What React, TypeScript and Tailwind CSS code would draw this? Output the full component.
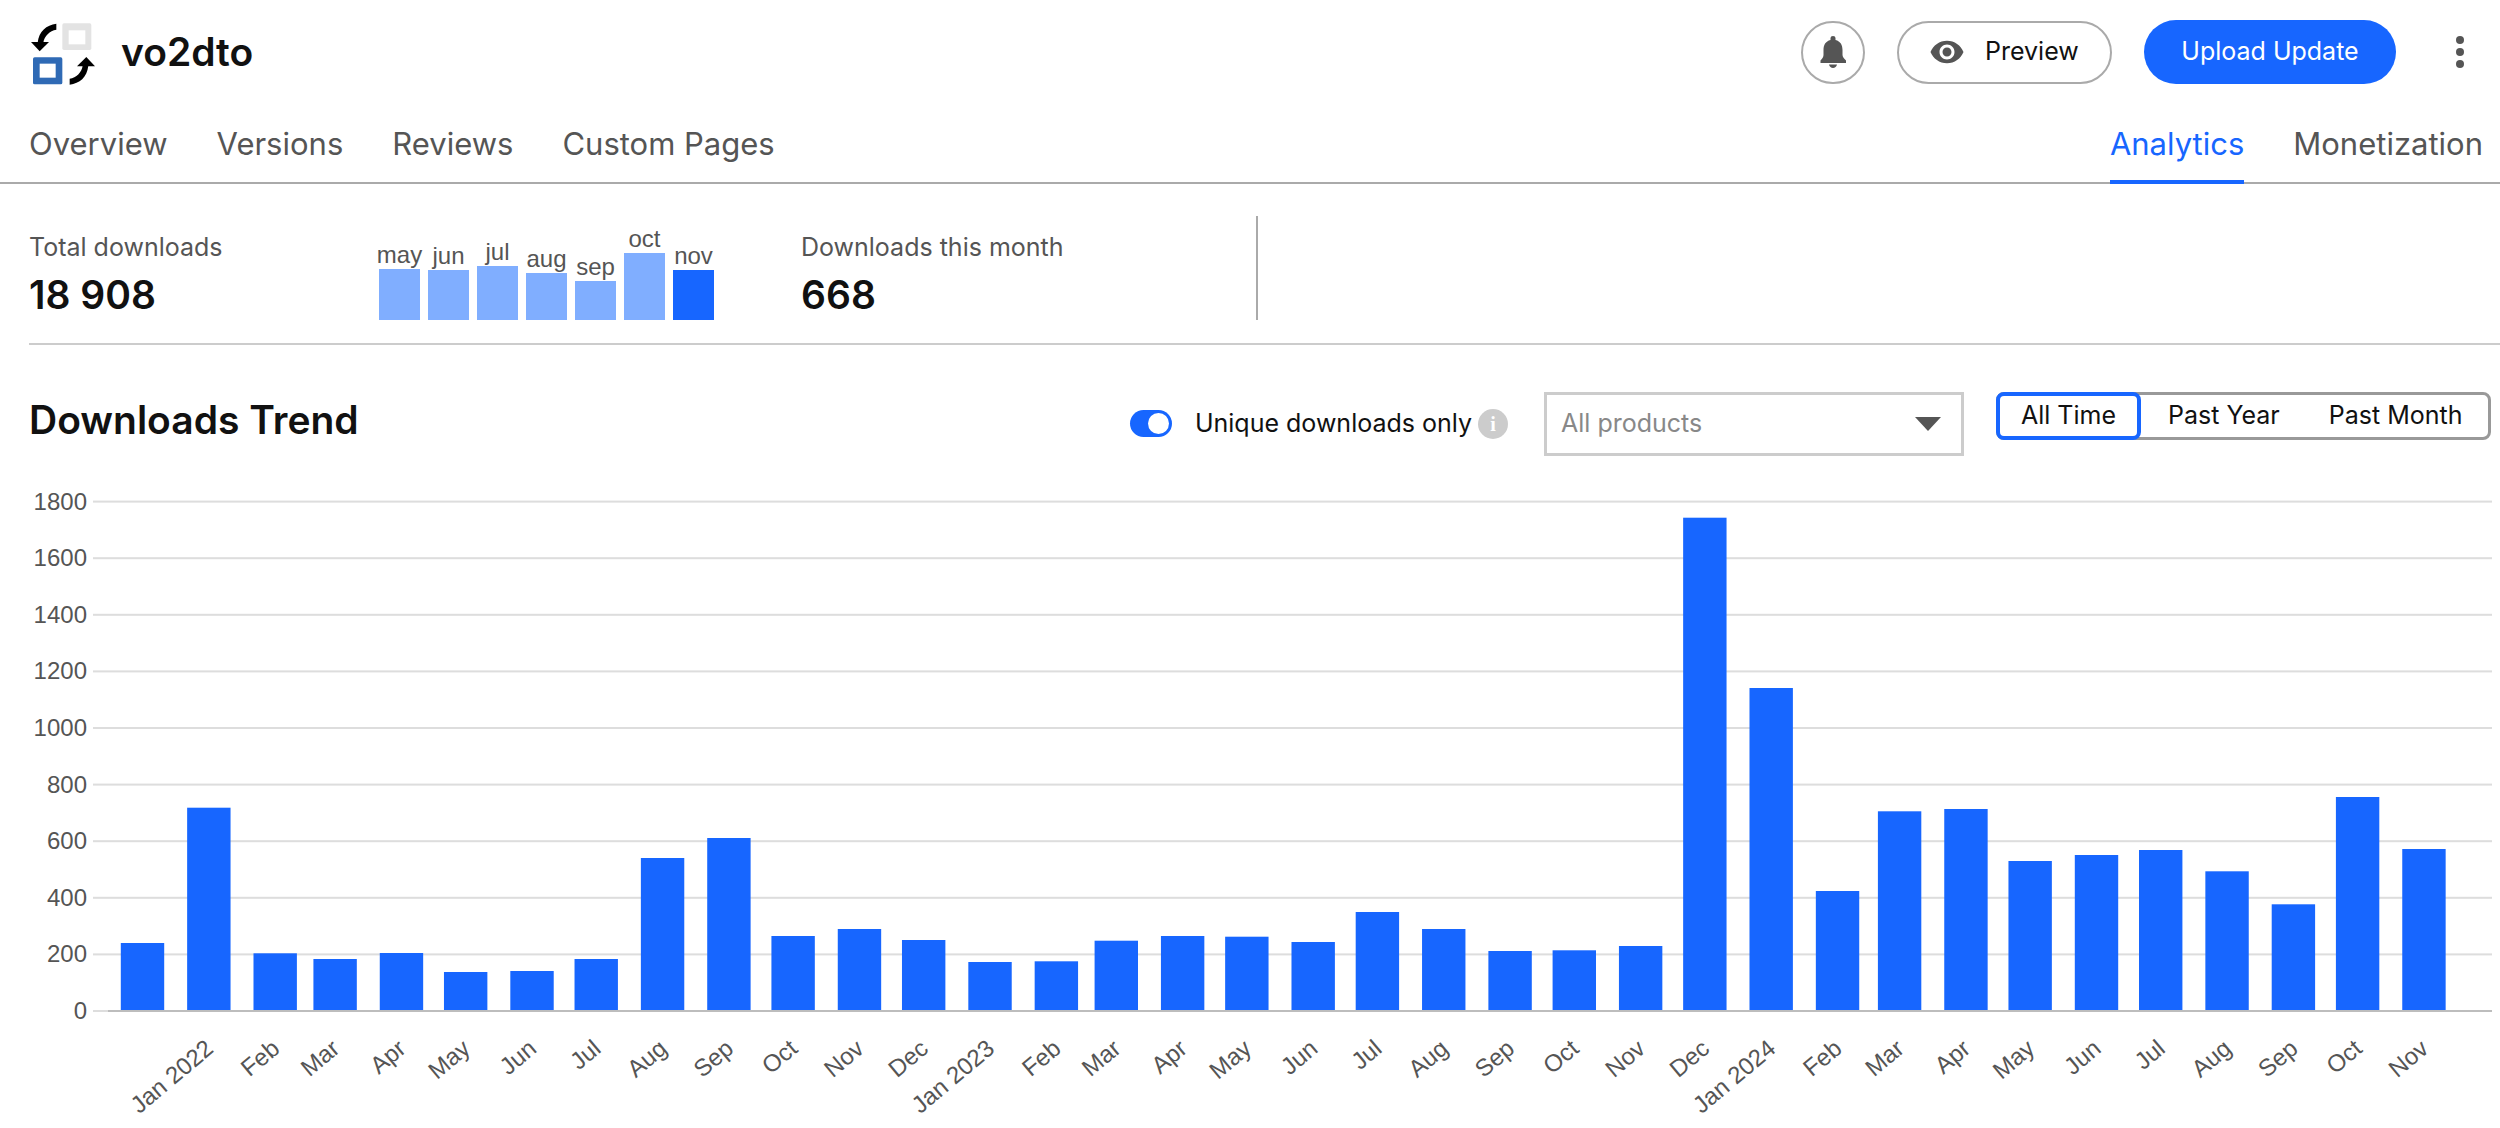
import { MdVisibility } from "react-icons/md"

const tops = [
  944, 808.7, 954.3, 960, 954, 973, 972, 960, 859, 839, 937, 930,
  941, 963, 962.3, 941.7, 937, 937.7, 943, 913, 930, 952, 951.3, 947,
  518.7, 689, 892, 812.3, 810, 862, 856, 851, 872.3, 905.3, 798, 850,
]

// days per month starting Dec 2021, the axis is a real time axis
const monthDays = [31, 31, 28, 31, 30, 31, 30, 31, 31, 30, 31, 30, 31, 31, 28, 31, 30, 31, 30, 31, 31, 30, 31, 30, 31, 31, 29, 31, 30, 31, 30, 31, 31, 30, 31]
const centers = monthDays.reduce((acc, d) => [...acc, acc[acc.length - 1] + d * 2.1402], [142.5])

const months = ["Jan 2022", "Feb", "Mar", "Apr", "May", "Jun", "Jul", "Aug", "Sep", "Oct", "Nov", "Dec", "Jan 2023", "Feb", "Mar", "Apr", "May", "Jun", "Jul", "Aug", "Sep", "Oct", "Nov", "Dec", "Jan 2024", "Feb", "Mar", "Apr", "May", "Jun", "Jul", "Aug", "Sep", "Oct", "Nov"]

const ticks = [1800, 1600, 1400, 1200, 1000, 800, 600, 400, 200, 0]

const miniBars = [
  { label: "may", h: 51 },
  { label: "jun", h: 50 },
  { label: "jul", h: 54 },
  { label: "aug", h: 47 },
  { label: "sep", h: 39 },
  { label: "oct", h: 67 },
  { label: "nov", h: 50, current: true },
]

function Logo() {
  return (
    <svg width="80" height="76" viewBox="0 0 240 228">
      <rect x="118" y="22" width="87" height="80" rx="5" fill="#e3e3e3" />
      <rect x="137" y="43" width="50" height="42" fill="#fff" />
      <rect x="30" y="124" width="88" height="81" rx="5" fill="#2f6ab5" />
      <rect x="50" y="143" width="48" height="42" fill="#fff" />
      <g id="arrow">
        <path d="M100 23C70 27 48 45 44 80L61 80C64 60 80 44 100 41Z" fill="#000" />
        <path d="M24 78L78 78L50 106Z" fill="#000" />
      </g>
      <g transform="rotate(180 120 114.5)">
        <path d="M100 23C70 27 48 45 44 80L61 80C64 60 80 44 100 41Z" fill="#000" />
        <path d="M24 78L78 78L50 106Z" fill="#000" />
      </g>
    </svg>
  )
}

function Bell() {
  return (
    <svg width="28" height="32" viewBox="0 0 28 32" fill="#555">
      <path d="M11.5 4V2a2.5 2 0 0 1 5 0v2c5 1.3 7 5 7 10v5c0 2 2 4 3.500 5.500V27H1.500v-2.500C3 23 4.500 21 4.500 19v-5c0-5 2-8.700 7-10z" />
      <path d="M10 28.500h8c-.5 2-2 3.500-4 3.500s-3.500-1.500-4-3.500z" />
    </svg>
  )
}

function Chart() {
  return (
    <svg width="2500" height="640" viewBox="0 480 2500 640" className="block font-[family-name:'Liberation_Sans',sans-serif]">
      {ticks.map((t, i) => {
        const y = 1012 - (t / 200) * 56.6
        return (
          <g key={t}>
            <rect x="93" y={y - 1} width="2399" height="2" fill={t === 0 ? "#ddd" : "#ddd"} />
            <text x="87" y={y + 8} textAnchor="end" fontSize="24" fill="#555">{t}</text>
          </g>
        )
      })}
      {tops.map((top, i) => (
        <rect key={i} x={centers[i] - 21.7} y={top} width="43.4" height={1011 - top} fill="#1766ff" />
      ))}
      <rect x="108" y="1011" width="2384" height="2" fill="#bdbdbd" />
      {months.map((m, i) => (
        <text key={i} transform={`translate(${centers[i + 1] + 6} 1052) rotate(-40)`} textAnchor="end" fontSize="24" fill="#555">
          {m}
        </text>
      ))}
    </svg>
  )
}

export default function App() {
  return (
    <div className="w-[2500px] h-[1128px] overflow-hidden bg-white font-[family-name:Inter,sans-serif] text-[#111]">
      <div className="flex items-center h-[64px] mt-[20px] pl-[33px]">
        <div className="-mt-[2px] -ml-[10px] -my-[6px]">
          <Logo />
        </div>
        <span className="ml-[18px] text-[39px] font-semibold">vo2dto</span>
        <div className="ml-auto flex items-center">
          <button className="w-[64px] h-[63px] rounded-full border-2 border-[#aaa] flex items-center justify-center">
            <Bell />
          </button>
          <button className="ml-[32px] w-[215px] h-[63px] rounded-full border-2 border-[#aaa] flex items-center pl-[30px] text-[25px]">
            <MdVisibility size={36} color="#555" />
            <span className="ml-[20px]">Preview</span>
          </button>
          <button className="ml-[32px] w-[252px] h-[64px] rounded-full bg-[#1766ff] text-white text-[25px]">Upload Update</button>
          <div className="ml-[60px] mr-[36px] flex flex-col gap-[4px]">
            <span className="w-[8px] h-[8px] rounded-full bg-[#555]" />
            <span className="w-[8px] h-[8px] rounded-full bg-[#555]" />
            <span className="w-[8px] h-[8px] rounded-full bg-[#555]" />
          </div>
        </div>
      </div>

      <div className="flex h-[100px] px-[17px] pl-[29px] border-b-2 border-[#aaa] text-[31px] text-[#555]">
        <div className="flex gap-[49px] pt-[37px]">
          <span>Overview</span>
          <span>Versions</span>
          <span>Reviews</span>
          <span>Custom Pages</span>
        </div>
        <div className="ml-auto flex gap-[49px]">
          <span className="h-[100px] pt-[37px] border-b-4 border-[#1766ff] text-[#1766ff]">Analytics</span>
          <span className="pt-[37px]">Monetization</span>
        </div>
      </div>

      <div className="ml-[29px] flex h-[161px] pt-[32px] border-b-2 border-[#ccc] items-start">
        <div className="w-[350px] pt-[13px]">
          <div className="text-[25px] text-[#555]">Total downloads</div>
          <div className="text-[39px] font-semibold leading-[47px] mt-[4px]">18 908</div>
        </div>
        <div className="flex gap-[8px] items-end h-[104px] font-[family-name:'Liberation_Sans',sans-serif]">
          {miniBars.map((b) => (
            <div key={b.label} className="w-[41px] flex flex-col items-center">
              <span className="text-[24px] leading-[28px] text-[#555] whitespace-nowrap">{b.label}</span>
              <div className={b.current ? "w-full bg-[#1766ff]" : "w-full bg-[#80aeff]"} style={{ height: b.h }} />
            </div>
          ))}
        </div>
        <div className="ml-[87px] w-[457px] h-[104px] border-r-2 border-[#aaa] pt-[13px]">
          <div className="text-[25px] text-[#555]">Downloads this month</div>
          <div className="text-[39px] font-semibold leading-[47px] mt-[4px]">668</div>
        </div>
      </div>

      <div className="flex items-start pl-[29px] pr-[9px] h-[134px] pt-[47px]">
        <h2 className="text-[39px] font-semibold leading-[56px]">Downloads Trend</h2>
        <div className="ml-auto flex items-center h-[64px]">
          <span className="w-[42px] h-[27px] rounded-full bg-[#1766ff] flex items-center justify-end pr-[3px] mt-[-2px]">
            <span className="w-[21px] h-[21px] rounded-full bg-white" />
          </span>
          <span className="ml-[23px] text-[25px]">Unique downloads only</span>
          <span className="ml-[6px] w-[30px] h-[30px] rounded-full bg-[#ccc] text-white text-[20px] font-bold flex items-center justify-center font-[family-name:'Liberation_Serif',serif]">i</span>
        </div>
        <div className="ml-[36px] w-[420px] h-[64px] border-[3px] border-[#ccc] flex items-center justify-between pl-[14px] pr-[20px] text-[25px] text-[#888]">
          <span>All products</span>
          <span className="w-0 h-0 border-x-[13px] border-x-transparent border-t-[14px] border-t-[#555]" />
        </div>
        <div className="ml-[32px] w-[495px] h-[48px] border-[3px] border-[#999] rounded-[8px] flex items-center text-[25px] relative">
          <span className="w-[145px] h-[48px] -ml-[3px] shrink-0 border-[4px] border-[#1766ff] rounded-[8px] flex items-center justify-center">All Time</span>
          <span className="ml-[27px]">Past Year</span>
          <span className="ml-[49px]">Past Month</span>
        </div>
      </div>

      <Chart />
    </div>
  )
}
